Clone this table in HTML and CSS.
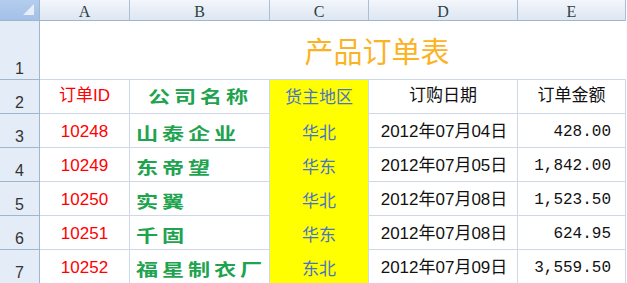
FILE: index.html
```html
<!DOCTYPE html>
<html lang="zh">
<head>
<meta charset="utf-8">
<title>产品订单表</title>
<link rel="stylesheet" href="styles.css">
</head>
<body>
<div class="sheet">
  <div class="corner">
    <svg width="12" height="12" viewBox="0 0 12 12"><polygon points="11,0 11,11 0,11" fill="#e6eef8"/></svg>
  </div>
  <div class="colhead">A</div>
  <div class="colhead">B</div>
  <div class="colhead">C</div>
  <div class="colhead">D</div>
  <div class="colhead">E</div>

  <div class="rowhead">1</div>
  <div class="title">产品订单表</div>

  <div class="rowhead">2</div>
  <div class="cell hd id">订单ID</div>
  <div class="cell hd name center"><span class="wide mid">公司名称</span></div>
  <div class="cell hd region">货主地区</div>
  <div class="cell hd plain">订购日期</div>
  <div class="cell hd plain">订单金额</div>

  <div class="rowhead">3</div>
  <div class="cell id">10248</div>
  <div class="cell name"><span class="wide">山泰企业</span></div>
  <div class="cell region">华北</div>
  <div class="cell date">2012年07月04日</div>
  <div class="cell amount">428.00</div>

  <div class="rowhead">4</div>
  <div class="cell id">10249</div>
  <div class="cell name"><span class="wide">东帝望</span></div>
  <div class="cell region">华东</div>
  <div class="cell date">2012年07月05日</div>
  <div class="cell amount">1,842.00</div>

  <div class="rowhead">5</div>
  <div class="cell id">10250</div>
  <div class="cell name"><span class="wide">实翼</span></div>
  <div class="cell region">华北</div>
  <div class="cell date">2012年07月08日</div>
  <div class="cell amount">1,523.50</div>

  <div class="rowhead">6</div>
  <div class="cell id">10251</div>
  <div class="cell name"><span class="wide">千固</span></div>
  <div class="cell region">华东</div>
  <div class="cell date">2012年07月08日</div>
  <div class="cell amount">624.95</div>

  <div class="rowhead">7</div>
  <div class="cell id">10252</div>
  <div class="cell name"><span class="wide">福星制衣厂</span></div>
  <div class="cell region">东北</div>
  <div class="cell date">2012年07月09日</div>
  <div class="cell amount">3,559.50</div>
</div>
</body>
</html>
```

FILE: styles.css
```css
html, body {
  margin: 0;
  padding: 0;
  background: #ffffff;
  overflow: hidden;
}

.sheet {
  display: grid;
  grid-template-columns: 40px 90px 140px 99px 149px 108px;
  grid-template-rows: 21px 59px repeat(6, 34px);
  font-family: "Liberation Sans", "Noto Sans CJK SC", sans-serif;
  color: #000;
}

.sheet > div {
  box-sizing: border-box;
  min-width: 0;
  overflow: hidden;
}

.corner {
  background: linear-gradient(#b4cdee, #a4c0e8);
  border-right: 1px solid #9eb6ce;
  border-bottom: 1px solid #9eb6ce;
  display: flex;
  align-items: flex-end;
  justify-content: flex-end;
  padding: 0 4px 4px 0;
}

.colhead {
  background: linear-gradient(#f3f6fb, #dde6f2);
  border-right: 1px solid #a9bfd6;
  border-bottom: 1px solid #9eb6ce;
  font-family: "Liberation Serif", "DejaVu Serif", serif;
  font-size: 16px;
  line-height: 1;
  color: #2d4141;
  display: flex;
  justify-content: center;
  align-items: center;
  padding-top: 3px;
}

.rowhead {
  background: #e4ecf7;
  border-right: 1px solid #9eb6ce;
  border-bottom: 1px solid #9eb6ce;
  font-size: 16px;
  line-height: 1;
  color: #333;
  display: flex;
  justify-content: center;
  align-items: flex-end;
  padding-bottom: 2px;
}

.title {
  grid-column: span 5;
  border-bottom: 1px solid #d0d7e5;
  font-family: "Noto Sans CJK SC", sans-serif;
  font-size: 29px;
  line-height: 1;
  color: #fbb324;
  display: flex;
  justify-content: center;
  align-items: flex-end;
  padding: 0 0 14px 88px;
}

.cell {
  border-right: 1px solid #d0d7e5;
  border-bottom: 1px solid #d0d7e5;
  font-size: 16px;
  line-height: 1;
  display: flex;
  align-items: center;
  justify-content: center;
  padding-top: 2px;
  white-space: nowrap;
}

.cell.hd {
  padding-top: 0;
  padding-bottom: 2px;
  font-size: 17px;
}

.id {
  color: #ff0000;
  font-size: 17px;
}

.name {
  justify-content: flex-start;
  padding-left: 6px;
  padding-top: 4px;
}

.name.center {
  justify-content: center;
  padding-left: 0;
}

.wide {
  display: inline-block;
  font-family: "Noto Sans CJK SC", sans-serif;
  font-size: 17px;
  font-weight: bold;
  letter-spacing: 3px;
  color: #1ea34f;
  transform: scaleX(1.3);
  transform-origin: left center;
}

.wide.mid {
  transform-origin: center center;
}

.region {
  background: #ffff00;
  border-bottom-color: #ffff00;
  color: #4a74c6;
  font-family: "Noto Sans CJK SC", sans-serif;
  font-size: 17px;
}

.plain {
  color: #111;
}

.date {
  color: #111;
  font-size: 17px;
  padding-left: 2px;
}

.amount {
  justify-content: flex-end;
  padding-right: 14px;
  font-family: "Liberation Mono", "Noto Sans CJK SC", monospace;
  color: #111;
}
```
